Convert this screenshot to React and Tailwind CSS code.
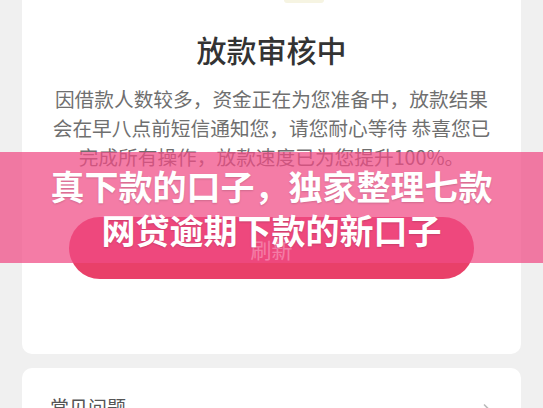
import { ChevronRight } from 'lucide-react'

const CJK = "font-['Noto_Sans_CJK_SC','Noto_Sans',sans-serif]"

export default function App() {
  return (
    <div className={`relative h-[408px] w-[543px] overflow-hidden bg-[#f0f0f0] ${CJK}`}>
      {/* status card */}
      <div className="mx-[22px] rounded-b-[10px] bg-white pb-[75px]">
        <div className="ml-[262px] h-[3px] w-[40px] rounded-b-full bg-[#f6f4e2]" />
        <h1 className="mt-[31px] text-center text-[30px] font-medium leading-[30px] text-[#333333]">
          放款审核中
        </h1>
        <p className="mt-[20px] whitespace-nowrap text-center text-[19.7px] leading-[29px] text-[#6f6f6f]">
          <span className="block">因借款人数较多，资金正在为您准备中，放款结果</span>
          <span className="block">会在早八点前短信通知您，请您耐心等待 恭喜您已</span>
          <span className="block">完成所有操作，放款速度已为您提升100%。</span>
        </p>
        <button className="mx-auto mt-[46px] flex h-[62px] w-[405px] items-center justify-center rounded-full bg-[#e94069] pt-[3px] text-[21px] text-white">
          刷新
        </button>
      </div>

      {/* faq card */}
      <div className="mx-[22px] mt-[14px] flex items-start justify-between rounded-[10px] bg-white pl-[28px] pr-[24px] pt-[27px] pb-[20px]">
        <span className="text-[19px] leading-[24px] text-[#555555]">常见问题</span>
        <ChevronRight className="mt-[5px] h-[20px] w-[20px] text-[#bbbbbb]" strokeWidth={2} />
      </div>

      {/* overlay banner */}
      <div className="absolute left-0 top-[152px] flex h-[111px] w-full flex-col items-center justify-center bg-[rgba(240,75,133,0.73)] text-[34px] font-bold leading-[44px] text-white [text-shadow:0_1px_2px_rgba(0,0,0,0.15)]">
        <span>真下款的口子，独家整理七款</span>
        <span>网贷逾期下款的新口子</span>
      </div>
    </div>
  )
}
